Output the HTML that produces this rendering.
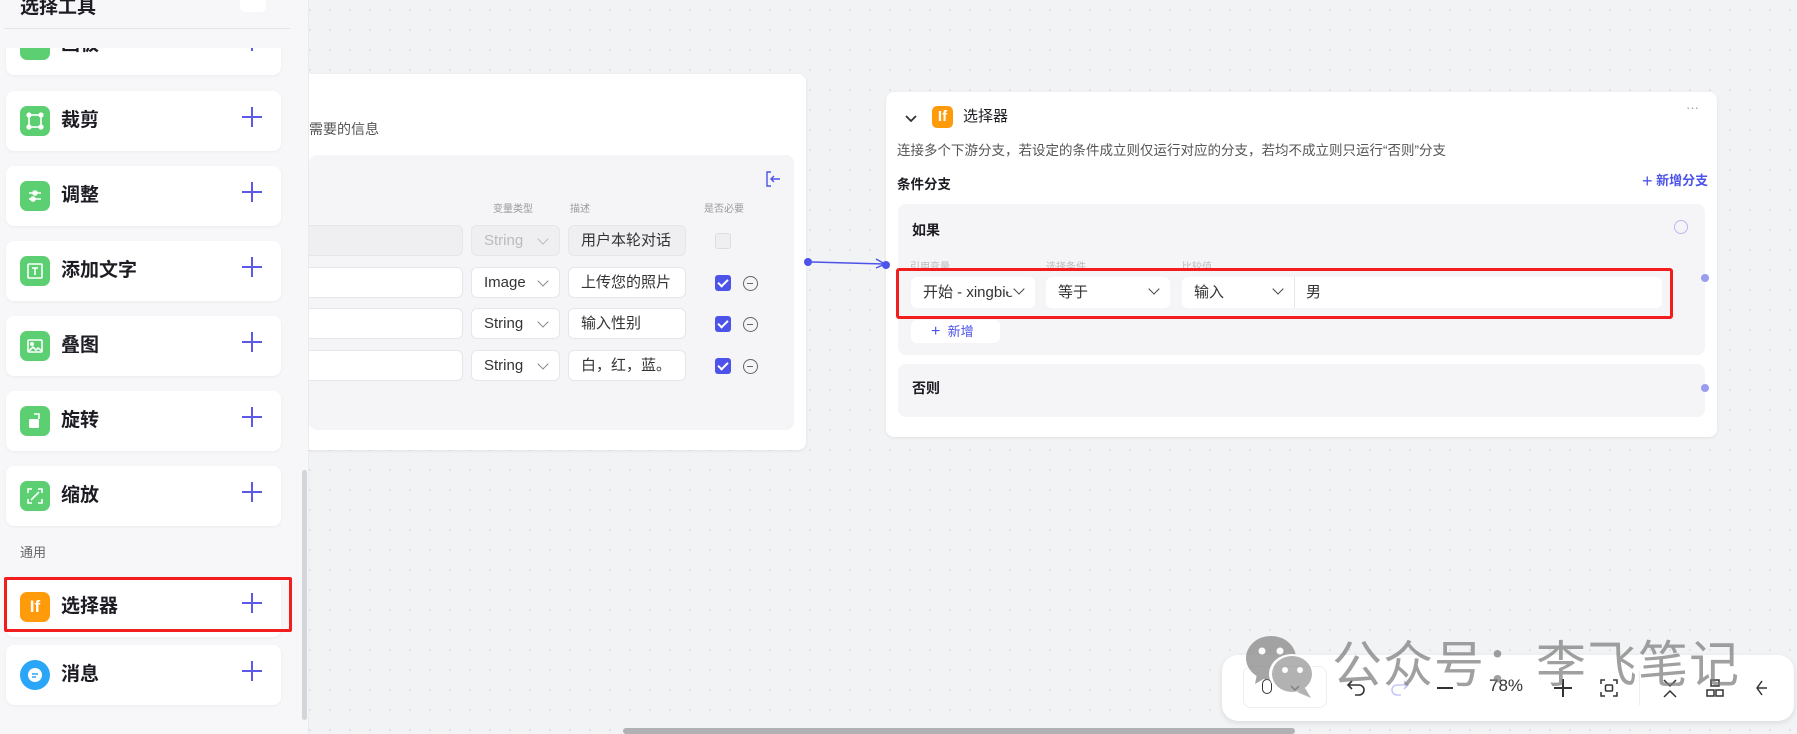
<!DOCTYPE html>
<html><head><meta charset="utf-8">
<style>
*{box-sizing:border-box;margin:0;padding:0}
body{width:1797px;height:734px;overflow:hidden;position:relative;background:#f2f3f5;font-family:"Liberation Sans","Noto Sans CJK SC",sans-serif;color:#1d1c23}
.canvas{position:absolute;left:0;top:0;width:1797px;height:734px;background-color:#f2f3f5;background-image:radial-gradient(#e1e2e6 1px,transparent 1.2px);background-size:20px 20px}
.abs{position:absolute}
.side{position:absolute;left:0;top:0;width:309px;height:734px;background:#f7f7f9;border-right:1px solid #ebebef}
.card{position:absolute;left:6px;width:275px;height:60px;background:#fff;border-radius:8px;box-shadow:0 1px 3px rgba(0,0,0,.05)}
.card .ic{position:absolute;left:14px;top:15px;width:30px;height:30px;border-radius:7px;background:#5ccf72;color:#fff;display:flex;align-items:center;justify-content:center}
.card .t{position:absolute;left:55px;top:16px;font-size:19px;font-weight:bold;line-height:28px}
.card .p{position:absolute;left:236px;top:16px;width:20px;height:20px}
.card .p:before,.card .p:after{content:"";position:absolute;background:#5a5ae6}
.card .p:before{left:9px;top:0;width:2px;height:20px}
.card .p:after{left:0;top:9px;width:20px;height:2px}
.node{position:absolute;background:#fff;border-radius:8px;box-shadow:0 1px 3px rgba(0,0,0,.08)}
.inp{position:absolute;height:31px;background:#fff;border:1px solid #e6e6ea;border-radius:6px;font-size:15px;line-height:29px;padding-left:12px;color:#333}
.chev{position:absolute;right:12px;top:9px;width:8px;height:8px;border-right:1.5px solid #888;border-bottom:1.5px solid #888;transform:rotate(45deg)}
.cb{position:absolute;width:16px;height:16px;border-radius:3px;background:#4d53e8}
.cb:after{content:"";position:absolute;left:5px;top:2px;width:4px;height:8px;border-right:2px solid #fff;border-bottom:2px solid #fff;transform:rotate(45deg)}
.mc{position:absolute;width:15px;height:15px;border:1.3px solid #666;border-radius:50%}
.mc:after{content:"";position:absolute;left:3px;top:6px;width:6px;height:1.3px;background:#666}
.sel{position:absolute;height:31px;background:#fff;border-radius:6px;font-size:15px;line-height:31px;padding-left:12px;color:#333}
.sel .chev{top:8px;border-color:#444}
.dot{position:absolute;width:8px;height:8px;border-radius:50%;background:#9a9cf0}
</style></head><body>
<div class="canvas"></div>

<!-- start node -->
<div class="node" style="left:280px;top:74px;width:526px;height:376px">
  <div class="abs" style="left:29px;top:45px;font-size:14px;color:#555">需要的信息</div>
  <div class="abs" style="left:29px;top:81px;width:485px;height:275px;background:#f5f5f7;border-radius:8px">
    <svg class="abs" style="left:456px;top:16px" width="16" height="16" viewBox="0 0 16 16" fill="none" stroke="#4d53e8" stroke-width="1.4"><path d="M6 1H2v14h4M6 8h9M9 5l-3 3 3 3"/></svg>
    <div class="abs" style="left:184px;top:45px;font-size:10px;color:#999">变量类型</div>
    <div class="abs" style="left:261px;top:45px;font-size:10px;color:#999">描述</div>
    <div class="abs" style="left:395px;top:45px;font-size:10px;color:#999">是否必要</div>
    <div class="inp" style="left:-30px;top:70px;width:184px;background:#efeff1"></div>
    <div class="inp" style="left:162px;top:70px;width:89px;background:#efeff1;color:#bbb">String<span class="chev" style="border-color:#bbb"></span></div>
    <div class="inp" style="left:259px;top:70px;width:118px;background:#efeff1">用户本轮对话</div>
    <div class="abs" style="left:406px;top:78px;width:16px;height:16px;border:1px solid #ddd;border-radius:3px;background:#efeff1"></div>
    <div class="inp" style="left:-30px;top:112px;width:184px"></div>
    <div class="inp" style="left:162px;top:112px;width:89px">Image<span class="chev"></span></div>
    <div class="inp" style="left:259px;top:112px;width:118px">上传您的照片</div>
    <div class="cb" style="left:406px;top:120px"></div><div class="mc" style="left:434px;top:121px"></div>
    <div class="inp" style="left:-30px;top:153px;width:184px"></div>
    <div class="inp" style="left:162px;top:153px;width:89px">String<span class="chev"></span></div>
    <div class="inp" style="left:259px;top:153px;width:118px">输入性别</div>
    <div class="cb" style="left:406px;top:161px"></div><div class="mc" style="left:434px;top:162px"></div>
    <div class="inp" style="left:-30px;top:195px;width:184px"></div>
    <div class="inp" style="left:162px;top:195px;width:89px">String<span class="chev"></span></div>
    <div class="inp" style="left:259px;top:195px;width:118px">白，红，蓝。</div>
    <div class="cb" style="left:406px;top:203px"></div><div class="mc" style="left:434px;top:204px"></div>
  </div>
</div>
<div class="abs" style="left:804px;top:258px;width:8px;height:8px;border-radius:50%;background:#4d53e8"></div>
<svg class="abs" style="left:810px;top:255px" width="80" height="16"><path d="M2 7 L74 9" stroke="#4d53e8" stroke-width="1.5"/><path d="M66 4 L75 9 L66 13" stroke="#4d53e8" stroke-width="1.5" fill="none"/></svg>

<!-- selector node -->
<div class="node" style="left:886px;top:92px;width:831px;height:345px">
  <svg class="abs" style="left:18px;top:20px" width="14" height="14"><path d="M2 4l5 5 5-5" stroke="#333" stroke-width="1.8" fill="none"/></svg>
  <div class="abs" style="left:46px;top:14px;width:21px;height:22px;border-radius:5px;background:#ff9a0a;color:#fff;font-size:15px;font-weight:bold;text-align:center;line-height:22px">If</div>
  <div class="abs" style="left:77px;top:15px;font-size:15px;line-height:20px">选择器</div>
  <div class="abs" style="left:800px;top:8px;font-size:13px;color:#999">···</div>
  <div class="abs" style="left:11px;top:47px;font-size:13.5px;color:#555">连接多个下游分支，若设定的条件成立则仅运行对应的分支，若均不成立则只运行“否则”分支</div>
  <div class="abs" style="left:11px;top:81px;font-size:13.5px;font-weight:bold">条件分支</div>
  <div class="abs" style="left:756px;top:78px;font-size:13px;color:#4d53e8;font-weight:bold"><span style="font-size:18px;font-weight:normal;vertical-align:-2px">+</span> 新增分支</div>
  <div class="abs" style="left:12px;top:112px;width:807px;height:151px;background:#f5f5f7;border-radius:8px">
    <div class="abs" style="left:14px;top:14px;font-size:14px;font-weight:bold;line-height:24px">如果</div>
    <div class="abs" style="left:776px;top:16px;width:14px;height:14px;border:1px solid #b8baf0;border-radius:50%"></div>
    <div class="abs" style="left:12px;top:54px;font-size:10px;color:#bbb">引用变量</div>
    <div class="abs" style="left:148px;top:54px;font-size:10px;color:#bbb">选择条件</div>
    <div class="abs" style="left:284px;top:54px;font-size:10px;color:#bbb">比较值</div>
    <div class="sel" style="left:13px;top:73px;width:124px;overflow:hidden;white-space:nowrap;padding-right:30px">开始 - xingbie<span class="chev" style="background:#fff;box-shadow:0 0 0 6px #fff"></span></div>
    <div class="sel" style="left:148px;top:73px;width:124px">等于<span class="chev"></span></div>
    <div class="sel" style="left:284px;top:73px;width:480px">输入<span class="chev" style="right:auto;left:92px"></span><div class="abs" style="left:112px;top:0;width:1px;height:31px;background:#e6e6ea"></div><span class="abs" style="left:124px">男</span></div>
    <div class="abs" style="left:13px;top:116px;width:89px;height:23px;background:#fff;border-radius:6px;font-size:13px;color:#4d53e8;line-height:23px;padding-left:20px"><span style="font-size:16px">+</span>&nbsp; 新增</div>
  </div>
  <div class="abs" style="left:12px;top:272px;width:807px;height:53px;background:#f5f5f7;border-radius:8px">
    <div class="abs" style="left:14px;top:12px;font-size:14px;font-weight:bold;line-height:24px">否则</div>
  </div>
</div>
<div class="abs" style="left:896px;top:268px;width:777px;height:51px;border:3px solid #f21d1d;border-radius:3px"></div>
<div class="abs" style="left:882px;top:261px;width:8px;height:8px;border-radius:50%;background:#4d53e8"></div>
<div class="dot" style="left:1701px;top:274px"></div>
<div class="dot" style="left:1701px;top:384px"></div>

<!-- sidebar -->
<div class="side">
  <div class="abs" style="left:20px;top:-8px;font-size:19px;font-weight:bold">选择工具</div>
  <div class="abs" style="left:240px;top:-6px;width:26px;height:18px;background:#fff;border-radius:5px"></div>
  <div class="abs" style="left:4px;top:28px;width:286px;height:1px;background:#e4e4e8"></div>
  <div class="abs" style="left:0;top:48px;width:309px;height:686px;overflow:hidden">
    <div class="card" style="top:-33px"><div class="ic"></div><div class="t">画板</div><div class="p"></div></div>
  </div>
  <div class="card" style="top:91px"><div class="ic"><svg width="18" height="18" fill="none" stroke="#fff" stroke-width="1.6"><rect x="3" y="3" width="12" height="12"/><circle cx="3" cy="3" r="1.8" fill="#fff"/><circle cx="15" cy="3" r="1.8" fill="#fff"/><circle cx="3" cy="15" r="1.8" fill="#fff"/><circle cx="15" cy="15" r="1.8" fill="#fff"/></svg></div><div class="t">裁剪</div><div class="p"></div></div>
  <div class="card" style="top:166px"><div class="ic"><svg width="18" height="18" stroke="#fff" stroke-width="1.6"><path d="M3 6h4M11 6h4M3 12h2M9 12h6"/><circle cx="9" cy="6" r="2" fill="#fff"/><circle cx="7" cy="12" r="2" fill="#fff"/></svg></div><div class="t">调整</div><div class="p"></div></div>
  <div class="card" style="top:241px"><div class="ic"><svg width="18" height="18" fill="none" stroke="#fff" stroke-width="1.6"><rect x="2" y="2" width="14" height="14" rx="1"/><path d="M6 6h6M9 6v7"/></svg></div><div class="t">添加文字</div><div class="p"></div></div>
  <div class="card" style="top:316px"><div class="ic"><svg width="18" height="18" fill="none" stroke="#fff" stroke-width="1.6"><rect x="2" y="3" width="14" height="12" rx="1"/><path d="M3 14l4-4 3 3 2-2 4 3"/><circle cx="6" cy="7" r="1.2" fill="#fff"/></svg></div><div class="t">叠图</div><div class="p"></div></div>
  <div class="card" style="top:391px"><div class="ic"><svg width="18" height="18" fill="#fff"><rect x="3" y="7" width="10" height="9" rx="1.5"/><path d="M8 2h5v5" stroke="#fff" stroke-width="1.6" fill="none"/></svg></div><div class="t">旋转</div><div class="p"></div></div>
  <div class="card" style="top:466px"><div class="ic"><svg width="18" height="18" fill="none" stroke="#fff" stroke-width="1.6"><path d="M2 6V2h4M12 2h4v4M16 12v4h-4M6 16H2v-4M5 13l8-8"/></svg></div><div class="t">缩放</div><div class="p"></div></div>
  <div class="abs" style="left:20px;top:542px;font-size:13px;color:#666">通用</div>
  <div class="card" style="top:577px"><div class="ic" style="background:#ff9a0a;font-size:17px;font-weight:bold">If</div><div class="t">选择器</div><div class="p"></div></div>
  <div class="abs" style="left:4px;top:577px;width:288px;height:55px;border:3px solid #f21d1d;border-radius:2px"></div>
  <div class="card" style="top:645px"><div class="ic" style="background:#2ba5f7;border-radius:15px"><svg width="18" height="18"><circle cx="9" cy="9" r="7" fill="#fff"/><path d="M6 8h6M6 11h4" stroke="#2ba5f7" stroke-width="1.5"/></svg></div><div class="t">消息</div><div class="p"></div></div>
  <div class="abs" style="left:302px;top:470px;width:5px;height:250px;background:#d4d5da;border-radius:3px"></div>
</div>

<!-- toolbar -->
<div class="abs" style="left:1222px;top:655px;width:572px;height:66px;background:#fff;border-radius:16px;box-shadow:0 2px 6px rgba(0,0,0,.1)">
  <div class="abs" style="left:21px;top:11px;width:84px;height:42px;border:1px solid #eee;border-radius:8px"></div>
  <div class="abs" style="left:40px;top:24px;width:10px;height:15px;border:1.5px solid #333;border-radius:5px"></div>
  <svg class="abs" style="left:67px;top:28px" width="12" height="10"><path d="M2 3l4 4 4-4" stroke="#333" stroke-width="1.4" fill="none"/></svg>
  <svg class="abs" style="left:124px;top:22px" width="22" height="22" fill="none" stroke="#333" stroke-width="1.6"><path d="M6 4L2 8l4 4M2 8h11a5 5 0 0 1 0 10H9"/></svg>
  <svg class="abs" style="left:166px;top:22px" width="22" height="22" fill="none" stroke="#c5c7f5" stroke-width="1.6"><path d="M16 4l4 4-4 4M20 8H9a5 5 0 0 0 0 10h4"/></svg>
  <div class="abs" style="left:215px;top:32px;width:16px;height:1.8px;background:#333"></div>
  <div class="abs" style="left:267px;top:21px;font-size:17px;color:#333">78%</div>
  <div class="abs" style="left:332px;top:32px;width:18px;height:1.8px;background:#333"></div>
  <div class="abs" style="left:340px;top:24px;width:1.8px;height:18px;background:#333"></div>
  <svg class="abs" style="left:377px;top:23px" width="20" height="20" fill="none" stroke="#333" stroke-width="1.5"><path d="M2 6V2h4M14 2h4v4M18 14v4h-4M6 18H2v-4"/><rect x="6.5" y="7" width="7" height="6" rx="1"/></svg>
  <div class="abs" style="left:417px;top:16px;width:1px;height:34px;background:#eee"></div>
  <svg class="abs" style="left:440px;top:22px" width="16" height="22" fill="none" stroke="#333" stroke-width="1.5"><path d="M2 3l6 6 6-6M2 20l6-6 6 6"/></svg>
  <svg class="abs" style="left:484px;top:24px" width="18" height="18" fill="none" stroke="#333" stroke-width="1.5"><rect x="5" y="1" width="8" height="6"/><rect x="1" y="11" width="7" height="6"/><rect x="10" y="11" width="7" height="6"/></svg>
  <svg class="abs" style="left:530px;top:24px" width="16" height="18" fill="none" stroke="#333" stroke-width="1.5"><path d="M10 2L5 9l5 7M5 9h10"/></svg>
</div>

<!-- watermark -->
<svg class="abs" style="left:1245px;top:634px;opacity:.75" width="75" height="68"><ellipse cx="26" cy="24" rx="25" ry="22" fill="#888"/><path d="M12 40l-2 10 12-7z" fill="#888"/><circle cx="17" cy="17" r="3.5" fill="#fff"/><circle cx="35" cy="17" r="3.5" fill="#fff"/><ellipse cx="47" cy="40" rx="23" ry="20" fill="#fff"/><ellipse cx="47" cy="40" rx="20" ry="18" fill="#999"/><path d="M60 54l6 10-14-6z" fill="#999"/><circle cx="40" cy="36" r="3" fill="#fff"/><circle cx="55" cy="36" r="3" fill="#fff"/></svg>
<div class="abs" style="left:1332px;top:632px;font-size:50px;color:rgba(120,120,120,.7);letter-spacing:1px;white-space:nowrap;line-height:66px">公众号：李飞笔记</div>

<div class="abs" style="left:623px;top:728px;width:672px;height:6px;background:#b0b1b5;border-radius:3px"></div>
</body></html>
